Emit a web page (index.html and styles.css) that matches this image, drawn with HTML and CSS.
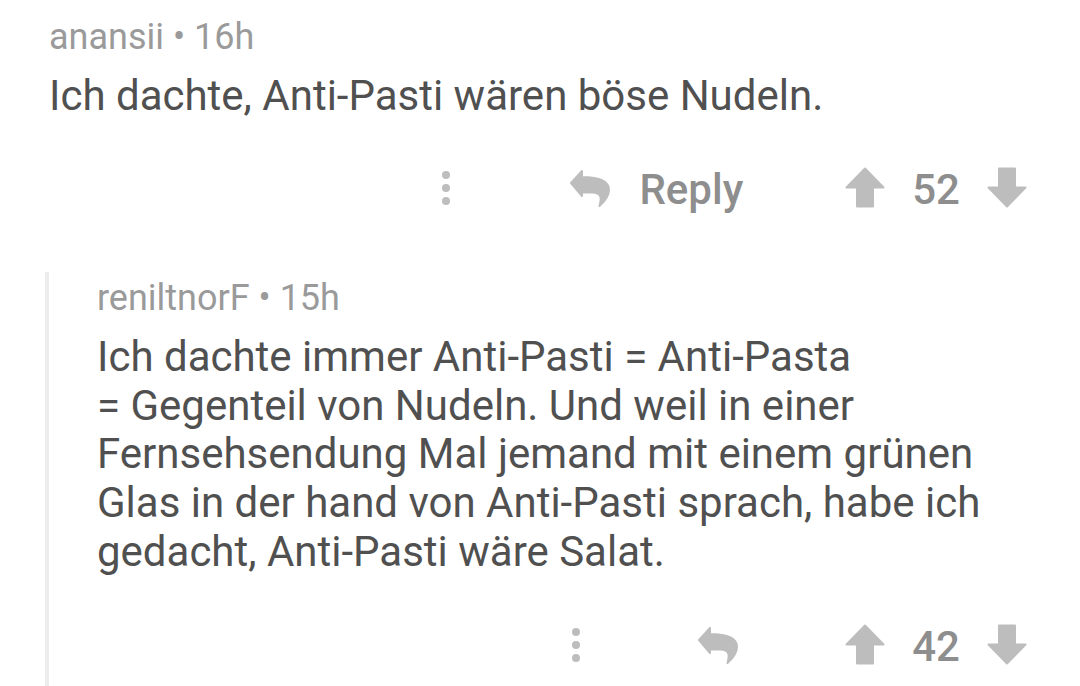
FILE: index.html
```html
<!DOCTYPE html>
<html lang="de">
<head>
<meta charset="utf-8">
<title>Kommentare</title>
<link rel="stylesheet" href="styles.css">
</head>
<body>
<div class="thread">
  <div class="comment">
    <div class="meta">anansii • 16h</div>
    <div class="body">Ich dachte, Anti-Pasti wären böse Nudeln.</div>
    <div class="actions">
      <span class="dots"><i></i><i></i><i></i></span>
      <span class="reply">
        <svg class="reply-icon" viewBox="0 0 40 38" width="40" height="38"><path d="M1,14 L12,2 L12,8 C26,8 39,11 39,21 C39,28 34,33 29.5,37 C31,31 33,23.5 22,23.5 L12,23.5 L12,27 Z"/></svg>
        <span class="reply-text">Reply</span>
      </span>
      <span class="vote">
        <svg class="arrow" viewBox="0 0 40 41" width="40" height="41"><path d="M20,1.5 L38.5,20.5 L28,20.5 L28,39.5 L12,39.5 L12,20.5 L1.5,20.5 Z"/></svg>
        <span class="score">52</span>
        <svg class="arrow" viewBox="0 0 40 41" width="40" height="41"><path d="M20,39.5 L38.5,20.5 L28,20.5 L28,1.5 L12,1.5 L12,20.5 L1.5,20.5 Z"/></svg>
      </span>
    </div>
  </div>
  <div class="comment child">
    <div class="meta">reniltnorF • 15h</div>
    <div class="body">Ich dachte immer Anti-Pasti = Anti-Pasta =&nbsp;Gegenteil von Nudeln. Und weil in einer Fernsehsendung Mal jemand mit einem grünen Glas in der hand von Anti-Pasti sprach, habe ich gedacht, Anti-Pasti wäre Salat.</div>
    <div class="actions">
      <span class="dots"><i></i><i></i><i></i></span>
      <span class="reply">
        <svg class="reply-icon" viewBox="0 0 40 38" width="40" height="38"><path d="M1,14 L12,2 L12,8 C26,8 39,11 39,21 C39,28 34,33 29.5,37 C31,31 33,23.5 22,23.5 L12,23.5 L12,27 Z"/></svg>
      </span>
      <span class="vote">
        <svg class="arrow" viewBox="0 0 40 41" width="40" height="41"><path d="M20,1.5 L38.5,20.5 L28,20.5 L28,39.5 L12,39.5 L12,20.5 L1.5,20.5 Z"/></svg>
        <span class="score">42</span>
        <svg class="arrow" viewBox="0 0 40 41" width="40" height="41"><path d="M20,39.5 L38.5,20.5 L28,20.5 L28,1.5 L12,1.5 L12,20.5 L1.5,20.5 Z"/></svg>
      </span>
    </div>
  </div>
</div>
</body>
</html>
```
FILE: styles.css
```css
html, body {
  margin: 0;
  padding: 0;
  background: #ffffff;
  height: 686px;
  overflow: hidden;
}

body {
  font-family: Roboto, "Noto Sans", "Liberation Sans", sans-serif;
}

.thread {
  padding: 17px 53px 0 49px;
}

.meta {
  font-size: 36px;
  line-height: 40px;
  color: #9a9a9a;
}

.body {
  margin-top: 15px;
  font-size: 42px;
  line-height: 48.75px;
  color: #505050;
}

.actions {
  display: flex;
  justify-content: flex-end;
  align-items: center;
  height: 44px;
  margin-top: 45px;
}

.dots {
  display: flex;
  flex-direction: column;
  gap: 5px;
  margin-right: 120px;
}

.dots i {
  display: block;
  width: 8px;
  height: 8px;
  border-radius: 50%;
  background: #bdbdbd;
}

.reply {
  display: flex;
  align-items: center;
  gap: 29px;
  margin-right: 102px;
}

.reply-icon path,
.arrow path {
  fill: #bdbdbd;
  stroke: #bdbdbd;
  stroke-width: 2;
  stroke-linejoin: round;
}

.reply-text,
.score {
  font-size: 42px;
  font-weight: 500;
  color: #8e8e8e;
  line-height: 44px;
  padding-top: 4px;
}

.vote {
  display: flex;
  align-items: center;
  gap: 27px;
}

.child {
  margin-top: 62px;
  margin-left: -4px;
  border-left: 4px solid #ededed;
  padding: 6px 0 0 48px;
  height: 420px;
}

.child .body {
  margin-top: 15px;
}

.child .actions {
  margin-top: 46px;
}

.child .reply {
  margin-right: 107px;
}

.child .dots {
  margin-right: 118px;
}
```
